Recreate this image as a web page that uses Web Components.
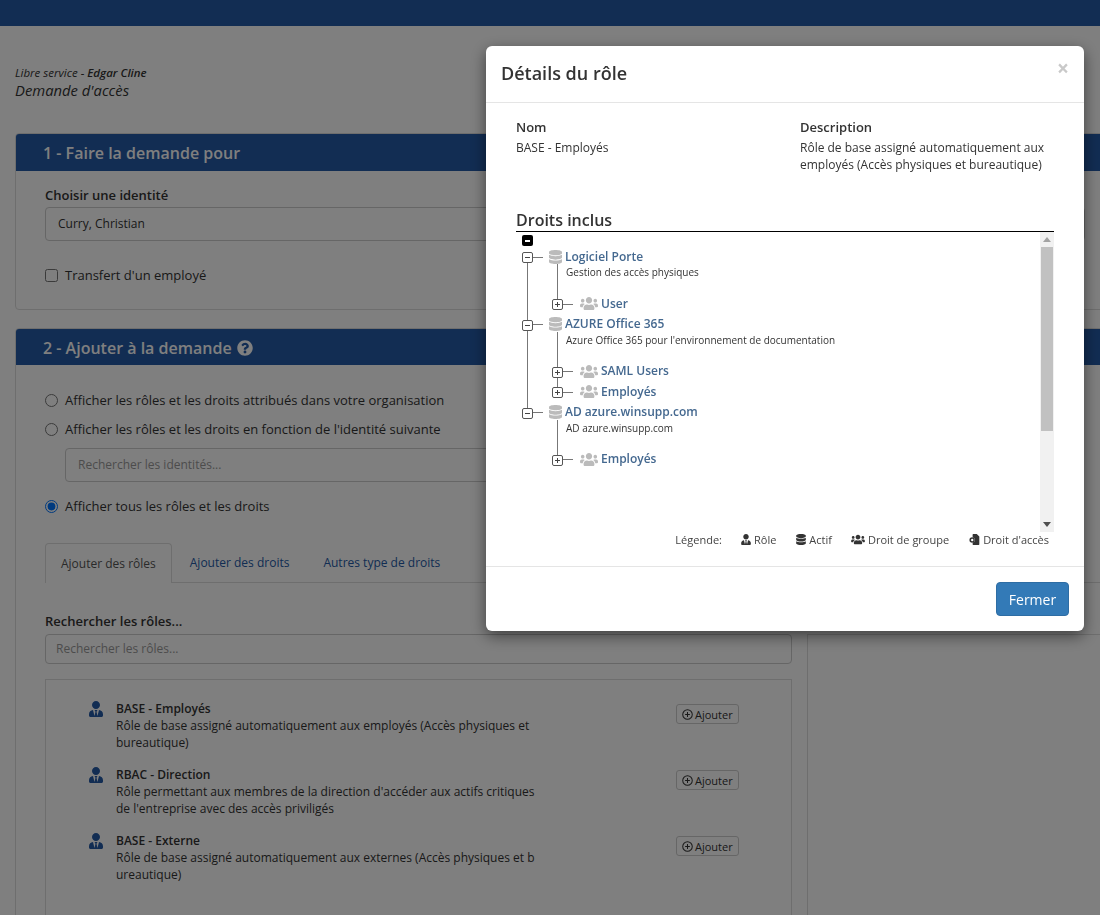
<!DOCTYPE html>
<html lang="fr">
<head>
<meta charset="utf-8">
<title>Demande d'accès</title>
<style>
  html, body { margin: 0; height: 915px; overflow: hidden; background: #fff; }
  body { font-family: "Open Sans", sans-serif; font-size: 13px; color: #333; }
</style>
</head>
<body>
<access-page></access-page>
<role-modal></role-modal>

<script>
/* icon paths, shared by every component */
const ICONS = {
  database: ['0 0 448 512', 'M448 73.143v45.714C448 159.143 347.667 192 224 192S0 159.143 0 118.857V73.143C0 32.857 100.333 0 224 0s224 32.857 224 73.143zM448 176v102.857C448 319.143 347.667 352 224 352S0 319.143 0 278.857V176c48.125 33.143 136.208 48.572 224 48.572S399.874 209.143 448 176zm0 160v102.857C448 479.143 347.667 512 224 512S0 479.143 0 438.857V336c48.125 33.143 136.208 48.572 224 48.572S399.874 369.143 448 336z'],
  users: ['0 0 640 512', 'M96 224c35.3 0 64-28.7 64-64s-28.7-64-64-64-64 28.7-64 64 28.7 64 64 64zm448 0c35.3 0 64-28.7 64-64s-28.7-64-64-64-64 28.7-64 64 28.7 64 64 64zm32 32h-64c-17.6 0-33.5 7.1-45.1 18.6 40.3 22.1 68.9 62 75.1 109.4h66c17.7 0 32-14.3 32-32v-32c0-35.3-28.7-64-64-64zm-256 0c61.9 0 112-50.1 112-112S381.9 32 320 32 208 82.1 208 144s50.1 112 112 112zm76.8 32h-8.3c-20.8 10-43.9 16-68.5 16s-47.6-6-68.5-16h-8.3C179.6 288 128 339.6 128 403.2V432c0 26.5 21.5 48 48 48h288c26.5 0 48-21.5 48-48v-28.8c0-63.6-51.6-115.2-115.2-115.2zm-223.7-13.4C161.5 263.1 145.6 256 128 256H64c-35.3 0-64 28.7-64 64v32c0 17.7 14.3 32 32 32h65.9c6.3-47.4 34.9-87.3 75.2-109.4z'],
  role: ['0 0 448 512', 'M224 256c70.7 0 128-57.3 128-128S294.7 0 224 0 96 57.3 96 128s57.3 128 128 128zm95.8 32.6L272 480l-32-136 32-56h-96l32 56-32 136-47.8-191.4C56.9 292 0 350.3 0 422.4V464c0 26.5 21.5 48 48 48h352c26.5 0 48-21.5 48-48v-41.6c0-72.1-56.9-130.4-128.2-133.8z'],
  help: ['0 0 512 512', 'M504 256c0 136.997-111.043 248-248 248S8 392.997 8 256C8 119.083 119.043 8 256 8s248 111.083 248 248zM262.655 90c-54.497 0-89.255 22.957-116.549 63.758-3.536 5.286-2.353 12.415 2.715 16.258l34.699 26.31c5.205 3.947 12.621 3.008 16.665-2.122 17.864-22.658 30.113-35.797 57.303-35.797 20.429 0 45.698 13.148 45.698 32.958 0 14.976-12.363 22.667-32.534 33.976C247.128 238.528 216 254.941 216 296v4c0 6.627 5.373 12 12 12h56c6.627 0 12-5.373 12-12v-1.333c0-28.462 83.186-29.647 83.186-106.667 0-58.002-60.165-102-116.531-102zM256 338c-25.365 0-46 20.635-46 46 0 25.364 20.635 46 46 46s46-20.636 46-46c0-25.365-20.635-46-46-46z'],
  access: ['0 0 512 512', 'M200 0h160l120 120v360a32 32 0 0 1-32 32H200a32 32 0 0 1-32-32v-50a160 160 0 0 0 0-300V32a32 32 0 0 1 32-32zM150 150a130 130 0 1 1 0 260a130 130 0 0 1 0-260zM150 225a55 55 0 1 0 0 110a55 55 0 0 0 0-110z']
};

class UiIcon extends HTMLElement {
  connectedCallback() {
    const [box, d] = ICONS[this.getAttribute('name')];
    const fit = this.hasAttribute('stretch') ? 'none' : 'xMidYMid meet';
    this.attachShadow({ mode: 'open' }).innerHTML = `
      <style>
        :host { display: inline-flex; flex: none; }
        svg { display: block; width: 100%; height: 100%; fill: currentColor; }
      </style>
      <svg viewBox="${box}" preserveAspectRatio="${fit}" fill-rule="evenodd"><path d="${d}"/></svg>`;
  }
}

class UiPanel extends HTMLElement {
  constructor() {
    super();
    this.attachShadow({ mode: 'open' }).innerHTML = `
      <style>
        :host { display: block; border: 1px solid #ddd; border-radius: 4px; background: #fff; margin-bottom: 18px; }
        header {
          display: flex; align-items: center; gap: 5px; height: var(--head, 36px); padding-left: 27px;
          background: #245aa6; color: #fff; font-size: 16px; font-weight: 600;
          border-radius: 3px 3px 0 0;
        }
        .body { padding: var(--pad, 16px) 29px 0; }
      </style>
      <header><slot name="title"></slot></header>
      <div class="body"><slot></slot></div>`;
  }
}

class RoleItem extends HTMLElement {
  constructor() {
    super();
    this.attachShadow({ mode: 'open' }).innerHTML = `
      <style>
        :host { display: flex; height: 66px; font-size: 12px; line-height: 17px; color: #333; }
        ui-icon { width: 14px; height: 16px; margin: 0 0 0 43px; color: #245aa6; position: relative; top: 1px; }
        .text { width: 420px; margin-left: 13px; word-break: break-all; }
        .name { font-weight: 600; }
        button {
          display: flex; align-items: center; gap: 2px; box-sizing: border-box;
          height: 20px; width: 63px; margin: 4px 0 0 140px; padding: 0 0 0 5px;
          border: 1px solid #ccc; border-radius: 3px; background: #fff;
          font: 11px "Open Sans", sans-serif; color: #333;
        }
        button svg { width: 11px; height: 11px; fill: none; stroke: #333; stroke-width: 1.1; }
      </style>
      <ui-icon name="role"></ui-icon>
      <div class="text">
        <div class="name"><slot name="name"></slot></div>
        <div><slot></slot></div>
      </div>
      <button><svg viewBox="0 0 12 12"><circle cx="6" cy="6" r="5.2"/><path d="M6 3.4v5.2M3.4 6h5.2"/></svg>Ajouter</button>`;
  }
}

class AccessPage extends HTMLElement {
  constructor() {
    super();
    this.attachShadow({ mode: 'open' }).innerHTML = `
      <style>
        :host { display: block; width: 1130px; height: 915px; overflow: hidden; }
        .top { height: 26px; background: #245aa6; }
        .crumbs { padding: 39px 15px 0; height: 67px; box-sizing: border-box; font-style: italic; }
        .crumbs .small { font-size: 11.5px; line-height: 14px; padding-top: 1px; }
        .crumbs b { font-weight: 600; }
        .crumbs .big { font-size: 14.8px; line-height: 20px; }
        main { padding: 0 0 0 15px; margin-top: 40px; }
        label.head { display: block; font-weight: 600; font-size: 13px; line-height: 18px; margin-bottom: 3px; }
        .control {
          box-sizing: border-box; display: flex; align-items: center; height: 34px; padding: 0 12px 2px;
          border: 1px solid #ccc; border-radius: 4px; background: #fff; font-size: 12px;
        }
        .placeholder { color: #999; }
        .check { display: flex; align-items: center; gap: 7px; font-size: 13px; line-height: 18px; }
        input { margin: 0; width: 13px; height: 13px; flex: none; accent-color: #0075ff; }
        .radios { display: flex; flex-direction: column; padding-top: 10px; }
        .radios .check { height: 18px; }
        .tabs { display: flex; height: 39px; margin-top: 28px; border-bottom: 1px solid #ddd; font-size: 12px; }
        .tabs span { display: flex; align-items: center; padding: 0 15px; margin-right: 4px; color: #245aa6; height: 38px; }
        .tabs .on { color: #555; border: 1px solid #ddd; border-bottom: 0; border-radius: 4px 4px 0 0; background: #fff; height: 39px; margin-right: 3px; }
        .columns { display: grid; grid-template-columns: 747px 1fr; column-gap: 15px; }
        .list { border: 1px solid #ddd; margin-top: 15px; height: 300px; padding-top: 20px; box-sizing: border-box; }
        .side { border-left: 1px solid #ddd; border-top: 1px solid #ddd; height: 300px; }
      </style>
      <div class="top"></div>
      <div class="crumbs">
        <div class="small">Libre service - <b>Edgar Cline</b></div>
        <div class="big">Demande d'accès</div>
      </div>
      <main>
        <ui-panel style="height:175px;--head:37px;--pad:15px">
          <span slot="title">1 - Faire la demande pour</span>
          <label class="head">Choisir une identité</label>
          <div class="control" style="width:1040px">Curry, Christian</div>
          <div class="check" style="margin-top:25px"><input type="checkbox"> Transfert d'un employé</div>
        </ui-panel>
        <ui-panel>
          <span slot="title" style="margin-top:2px">2 - Ajouter à la demande</span>
          <ui-icon slot="title" name="help" style="width:16px;height:16px;margin-top:1px"></ui-icon>
          <div class="radios">
            <div class="check"><input type="radio" name="m"> Afficher les rôles et les droits attribués dans votre organisation</div>
            <div class="check" style="margin-top:11px"><input type="radio" name="m"> Afficher les rôles et les droits en fonction de l'identité suivante</div>
            <div class="control placeholder" style="width:727px;margin:10px 0 0 20px">Rechercher les identités...</div>
            <div class="check" style="margin-top:15px"><input type="radio" name="m" checked> Afficher tous les rôles et les droits</div>
          </div>
          <nav class="tabs">
            <span class="on">Ajouter des rôles</span><span>Ajouter des droits</span><span>Autres type de droits</span>
          </nav>
          <div class="columns" style="margin-top:29px">
            <div>
              <label class="head" style="margin-bottom:4px">Rechercher les rôles...</label>
              <div class="control placeholder" style="height:30px;padding:0 10px 2px">Rechercher les rôles...</div>
              <div class="list">
                <role-item><span slot="name">BASE - Employés</span>Rôle de base assigné automatiquement aux employés (Accès physiques et bureautique)</role-item>
                <role-item><span slot="name">RBAC - Direction</span>Rôle permettant aux membres de la direction d'accéder aux actifs critiques de l'entreprise avec des accès priviligés</role-item>
                <role-item><span slot="name">BASE - Externe</span>Rôle de base assigné automatiquement aux externes (Accès physiques et bureautique)</role-item>
              </div>
            </div>
            <div class="side" style="margin-top:22px"></div>
          </div>
        </ui-panel>
      </main>`;
  }
}

class TreeNode extends HTMLElement {
  constructor() {
    super();
    const asset = this.getAttribute('kind') === 'asset';
    const line = this.hasAttribute('line');
    this.attachShadow({ mode: 'open' }).innerHTML = `
      <style>
        :host { display: block; position: relative; }
        :host([kind="asset"]) { margin-bottom: 1px; }
        .row { display: flex; align-items: center; height: 17px; position: relative; }
        .right { margin-bottom: 3.5px; }
        .box {
          box-sizing: border-box; flex: none; width: 11px; height: 11px; margin-top: 2px;
          border: 1px solid #555; border-radius: 2px; position: relative; background: #fff;
        }
        .box::before { content: ""; position: absolute; left: 2px; right: 2px; top: 4px; height: 1px; background: #444; }
        .box.plus::after { content: ""; position: absolute; top: 2px; bottom: 2px; left: 4px; width: 1px; background: #444; }
        .dash { flex: none; width: 10px; height: 1px; background: #777; margin-top: 1px; }
        ui-icon { color: #bbb; }
        .asset ui-icon { width: 13px; height: 14px; margin-left: 6px; }
        .right ui-icon { width: 18px; height: 15px; margin-left: 7px; }
        .label { color: #44688f; font-size: 12px; font-weight: 600; margin-left: 3px; white-space: nowrap; }
        .desc { font-size: 10px; line-height: 14px; margin: 0 0 0 44px; height: 16px; color: #333; }
        .children { padding: 14px 0 0 30px; position: relative; }
        .asset-line { position: absolute; left: 35px; top: 16px; bottom: 12px; width: 1px; background: #777; }
        .rail { position: absolute; left: 5px; top: 15px; height: 100%; width: 1px; background: #777; }
      </style>
      ${line ? '<div class="rail"></div>' : ''}
      <div class="row ${asset ? 'asset' : 'right'}">
        <span class="box ${asset ? '' : 'plus'}"></span><span class="dash"></span>
        <ui-icon name="${asset ? 'database' : 'users'}" stretch></ui-icon>
        <span class="label"><slot name="label"></slot></span>
      </div>
      ${asset ? `<div class="asset-line"></div>
        <div class="desc"><slot name="desc"></slot></div>
        <div class="children"><slot></slot></div>` : ''}`;
  }
}

class RoleModal extends HTMLElement {
  constructor() {
    super();
    this.attachShadow({ mode: 'open' }).innerHTML = `
      <style>
        :host { position: fixed; inset: 0; display: block; background: rgba(0,0,0,.5); z-index: 10; }
        .dialog {
          position: absolute; left: 486px; top: 46px; width: 598px; height: 585px;
          display: flex; flex-direction: column;
          background: #fff; border-radius: 6px; box-shadow: 0 5px 15px rgba(0,0,0,.5);
        }
        header {
          display: flex; justify-content: space-between; box-sizing: border-box; height: 57px;
          padding: 15px 15px 0; border-bottom: 1px solid #e5e5e5; flex: none;
        }
        h4 { margin: 0; font-size: 18px; font-weight: 600; line-height: 25px; color: #333; }
        header span { font-size: 21px; font-weight: 700; line-height: 15px; color: #c9c9c9; }
        .body { flex: 1; padding: 15px 30px 0; min-height: 0; font-size: 12px; line-height: 18px; }
        .info { display: grid; grid-template-columns: 284px 1fr; height: 92px; line-height: 17px; }
        .info b { display: block; font-weight: 600; font-size: 13px; line-height: 18px; margin-bottom: 3px; }
        .title { font-size: 16px; font-weight: 600; line-height: 21px; border-bottom: 1px solid #000; color: #333; }
        .scroll { display: flex; height: 300px; }
        .tree { flex: 1; padding: 3px 0 0 6px; min-width: 0; }
        .root {
          box-sizing: border-box; width: 11px; height: 11px; background: #000; border-radius: 2px;
          display: flex; align-items: center; justify-content: center; margin-bottom: 2px;
        }
        .root i { display: block; width: 5px; height: 2px; background: #fff; }
        .bar { flex: none; width: 14px; background: #f1f1f1; display: flex; flex-direction: column; align-items: center; }
        .bar .up, .bar .down { width: 0; height: 0; border: 4px solid transparent; }
        .bar .up { border-bottom: 5px solid #a3a3a3; border-top: 0; margin: 5px 0 5px; }
        .bar .thumb { width: 12px; height: 184px; background: #c1c1c1; }
        .bar .down { border-top: 5px solid #505050; border-bottom: 0; margin-top: auto; margin-bottom: 5px; }
        .legend { display: flex; justify-content: flex-end; align-items: center; height: 17px; padding-right: 5px; font-size: 11px; color: #444; position: relative; top: -1px; }
        .legend span { display: flex; align-items: center; gap: 3px; margin-left: 20px; }
        .legend span.tight { margin-left: 19px; }
        .legend ui-icon { height: 11px; color: #333; }
        footer { display: flex; justify-content: flex-end; box-sizing: border-box; height: 65px; padding: 15px; border-top: 1px solid #e5e5e5; flex: none; }
        button {
          box-sizing: border-box; width: 73px; height: 34px; border: 1px solid #2e6da4; border-radius: 4px;
          background: #337ab7; color: #fff; font: 14px "Open Sans", sans-serif;
        }
      </style>
      <section class="dialog">
        <header><h4>Détails du rôle</h4><span>×</span></header>
        <div class="body">
          <div class="info">
            <div><b>Nom</b>BASE - Employés</div>
            <div><b>Description</b>Rôle de base assigné automatiquement aux employés (Accès physiques et bureautique)</div>
          </div>
          <div class="title">Droits inclus</div>
          <div class="scroll">
            <div class="tree">
              <div class="root"><i></i></div>
              <tree-node kind="asset" line>
                <span slot="label">Logiciel Porte</span><span slot="desc">Gestion des accès physiques</span>
                <tree-node kind="right"><span slot="label">User</span></tree-node>
              </tree-node>
              <tree-node kind="asset" line style="margin-bottom:2px">
                <span slot="label">AZURE Office 365</span><span slot="desc">Azure Office 365 pour l'environnement de documentation</span>
                <tree-node kind="right"><span slot="label">SAML Users</span></tree-node>
                <tree-node kind="right"><span slot="label">Employés</span></tree-node>
              </tree-node>
              <tree-node kind="asset">
                <span slot="label">AD azure.winsupp.com</span><span slot="desc">AD azure.winsupp.com</span>
                <tree-node kind="right"><span slot="label">Employés</span></tree-node>
              </tree-node>
            </div>
            <div class="bar"><i class="up"></i><i class="thumb"></i><i class="down"></i></div>
          </div>
          <div class="legend">
            Légende:
            <span class="tight"><ui-icon name="role" style="width:10px"></ui-icon>Rôle</span>
            <span><ui-icon name="database" style="width:10px"></ui-icon>Actif</span>
            <span class="tight"><ui-icon name="users" style="width:14px"></ui-icon>Droit de groupe</span>
            <span><ui-icon name="access" style="width:11px"></ui-icon>Droit d'accès</span>
          </div>
        </div>
        <footer><button>Fermer</button></footer>
      </section>`;
  }
}

customElements.define('ui-icon', UiIcon);
customElements.define('ui-panel', UiPanel);
customElements.define('role-item', RoleItem);
customElements.define('access-page', AccessPage);
customElements.define('tree-node', TreeNode);
customElements.define('role-modal', RoleModal);
</script>
</body>
</html>
